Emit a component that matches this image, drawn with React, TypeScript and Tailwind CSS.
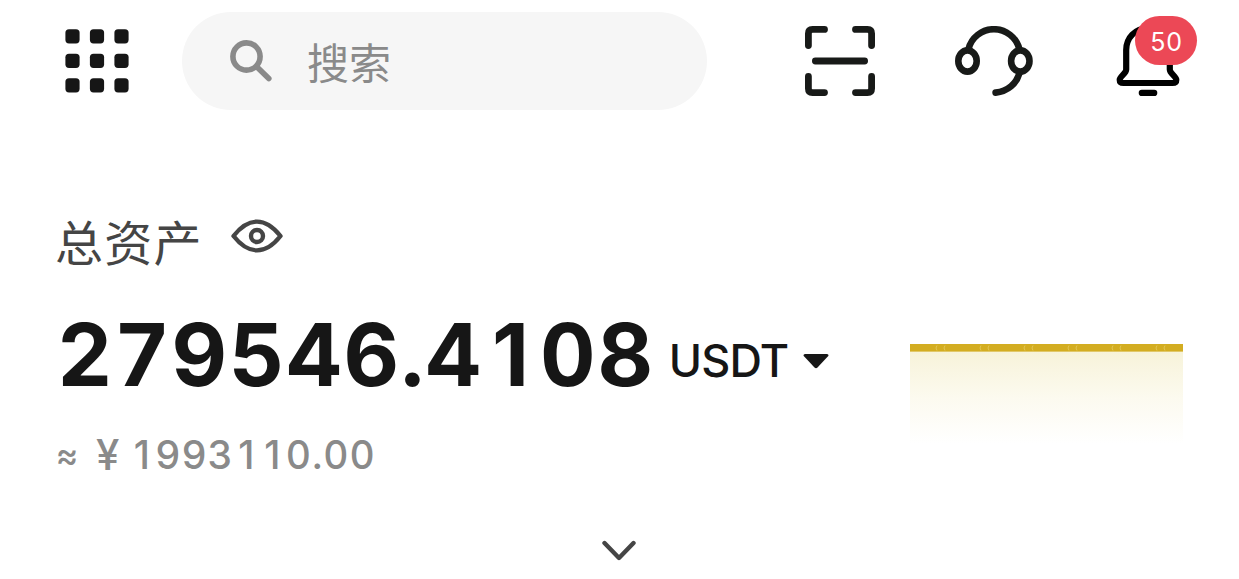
import React from 'react';

const dots = [0, 24.5, 49];

const GridIcon = () => (
  <svg width="64" height="64" viewBox="0 0 64 64" fill="#161616">
    {dots.map((y) => dots.map((x) => (
      <rect key={`${x}-${y}`} x={x + 0.4} y={y + 0.2} width="14.2" height="14.2" rx="3.6" />
    )))}
  </svg>
);

const SearchIcon = () => (
  <svg width="42" height="42" viewBox="0 0 42 42" fill="none" stroke="#8a8a8a" strokeLinecap="round">
    <circle cx="16.5" cy="16.5" r="13.6" strokeWidth="5.6" />
    <path d="M27 27 L38.8 38.6" strokeWidth="5.6" />
  </svg>
);

const ScanIcon = () => (
  <svg width="70" height="70" viewBox="0 0 70 70" fill="none" stroke="#181a18" strokeWidth="6.8" strokeLinecap="round" strokeLinejoin="round">
    <path d="M19.5 3.4H7.5Q3.4 3.4 3.4 7.5V19.5" />
    <path d="M50.5 3.4H62.5Q66.6 3.4 66.6 7.5V19.5" />
    <path d="M3.4 50.5V62.5Q3.4 66.6 7.5 66.6H19.5" />
    <path d="M66.6 50.5V62.5Q66.6 66.6 62.5 66.6H50.5" />
    <path d="M10.4 35H59.6" />
  </svg>
);

const HeadsetIcon = () => (
  <svg width="78" height="70" viewBox="0 0 78 70" fill="none" stroke="#181a18" strokeWidth="6.6" strokeLinecap="round">
    <ellipse cx="12.5" cy="35" rx="9.2" ry="10.6" />
    <ellipse cx="65.3" cy="35" rx="9.2" ry="10.6" />
    <path d="M13.5 23A26.2 26.2 0 0 1 64.3 23" />
    <path d="M64.5 47C61.5 57.5 53 65.5 40.6 66.6" />
  </svg>
);

const BellIcon = () => (
  <svg width="64" height="72" viewBox="0 0 64 72" fill="none" stroke="#000" strokeWidth="6.2" strokeLinecap="round" strokeLinejoin="round">
    <path d="M32 3.3C19 3.3 10.2 13 10.2 25V44.5C10.2 48.5 3.7 51.5 3.7 54.8Q3.7 58 7.5 58H56.5Q60.3 58 60.3 54.8C60.3 51.5 53.8 48.5 53.8 44.5V25C53.8 13 45 3.3 32 3.3Z" />
    <path d="M25.8 67.9H38.2" />
  </svg>
);

const EyeIcon = () => (
  <svg width="52" height="34" viewBox="0 0 52 34" fill="none" stroke="#454545" strokeWidth="4.4" strokeLinejoin="round">
    <path d="M2.5 17C10 7.5 17 2.6 26 2.6S42 7.5 49.5 17C42 26.5 35 31.4 26 31.4S10 26.5 2.5 17Z" />
    <circle cx="26" cy="17" r="6" />
  </svg>
);

const BalanceChart = () => (
  <svg width="273" height="100" viewBox="0 0 273 100">
    <defs>
      <linearGradient id="area" x1="0" y1="0" x2="0" y2="1">
        <stop offset="0" stopColor="#f7f3d9" />
        <stop offset="0.5" stopColor="#fcfaef" />
        <stop offset="1" stopColor="#ffffff" />
      </linearGradient>
    </defs>
    <rect y="7" width="273" height="93" fill="url(#area)" />
    <rect width="273" height="7.6" fill="#d3ad21" />
    {[27, 71, 115, 159, 203, 247].map((x) => (
      <path key={x} d={`M${x} 1.5Q${x - 2} 4 ${x} 6.5M${x + 8} 1.5Q${x + 6} 4 ${x + 8} 6.5`} stroke="#e2c552" fill="none" />
    ))}
  </svg>
);

// the tabular "1" has a foot, so the plain one is centred in a digit-wide slot
const Amount = ({ value, slot }: { value: string; slot: string }) => (
  <>
    {value.split(/(1)/).map((part, i) =>
      part === '1' ? (
        <span key={i} className={`inline-block text-center proportional-nums ${slot}`}>1</span>
      ) : (
        part
      )
    )}
  </>
);

export default function App() {
  return (
    <div className="h-[579px] w-[1239px] overflow-hidden bg-white font-['Inter','Noto_Sans_CJK_SC',sans-serif] text-[#161616]">
      <header className="flex items-start pt-3 pl-[65px]">
        <button className="mt-[17px]"><GridIcon /></button>
        <div className="ml-[53px] flex h-[98px] w-[525px] items-center rounded-full bg-[#f6f6f6] pl-[48px]">
          <SearchIcon />
          <span className="mt-[5px] ml-[35px] text-[42px] leading-[60px] text-[#8a8a8a]">搜索</span>
        </div>
        <button className="mt-[14px] ml-[98px]"><ScanIcon /></button>
        <button className="mt-[14px] ml-[80px]"><HeadsetIcon /></button>
        <button className="relative mt-[13px] ml-[83px]">
          <BellIcon />
          <span className="absolute -top-[9px] left-[19px] flex h-[49px] w-[62px] items-center justify-center rounded-full bg-[#ec4856] pt-[4px] pl-px text-[25px] tracking-[0.8px] text-white">
            50
          </span>
        </button>
      </header>

      <main className="flex items-start pl-[56px]">
        <section className="w-[854px] pt-[98px]">
          <div className="flex h-[72px] items-center">
            <span className="-ml-px text-[48px] leading-[72px] tracking-[1.2px] text-[#454545]">总资产</span>
            <button className="-mt-[16px] ml-[28px]"><EyeIcon /></button>
          </div>
          <div className="mt-[25px] flex h-[100px] items-baseline">
            <span className="ml-px text-[86px] leading-[100px] font-bold tracking-[1.7px] tabular-nums">
              <Amount value="279546.4108" slot="w-[57.2px]" />
            </span>
            <span className="ml-[14px] -translate-y-[9px] text-[45px] leading-[60px] font-[450] tracking-[-0.8px]">USDT</span>
            <svg className="ml-[15px] -translate-y-[17px]" width="26" height="16" viewBox="0 0 26 16" fill="#161616">
              <path d="M2 1H24Q26.5 1.5 24.8 3.6L14.5 14.5Q13 16 11.5 14.5L1.2 3.6Q-.5 1.5 2 1Z" />
            </svg>
          </div>
          <div className="mt-[22px] flex h-[56px] items-center text-[39px] font-medium tracking-[0.9px] tabular-nums text-[#8a8a8a]">
            <span className="-mt-[2px] text-[34px]">≈</span>
            <span className="-mt-[2px] ml-[17px] text-[42px]">¥</span>
            <span className="ml-[9px]">
              <Amount value="1993110.00" slot="w-[26px]" />
            </span>
          </div>
        </section>
        <div className="pt-[234px]"><BalanceChart /></div>
      </main>

      <div className="flex justify-center pt-[57px] pr-[2px]">
        <svg width="34" height="22" viewBox="0 0 34 22" fill="none" stroke="#454545" strokeWidth="4.4" strokeLinecap="round" strokeLinejoin="round">
          <path d="M2.5 3L17 18L31.5 3" />
        </svg>
      </div>
    </div>
  );
}
